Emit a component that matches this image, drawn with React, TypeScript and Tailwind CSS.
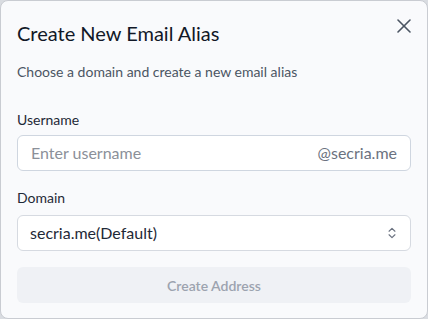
import React from "react";

export default function App() {
  return (
    <div className="w-[428px] h-[319px] bg-[#d9dce1] font-['Lato',sans-serif]">
      <div className="relative w-full h-full rounded-[8px] border border-[#c9ccd2] bg-[#f9fafc] px-4 pt-[18px]">
        <button className="absolute left-[396px] top-[18px] text-[#4b5563]">
          <svg width="14" height="14" viewBox="0 0 14 14" fill="none" stroke="currentColor" strokeWidth="1.6" strokeLinecap="round">
            <path d="M1 1 13 13" />
            <path d="M13 1 1 13" />
          </svg>
        </button>
        <h2 className="text-[20px] leading-[28px] font-normal text-[#111827]">Create New Email Alias</h2>
        <p className="mt-[15px] text-[14px] leading-[20px] text-[#4b5563]">Choose a domain and create a new email alias</p>
        <div className="mt-[28px] flex flex-col">
          <label className="text-[14px] leading-[20px] font-normal text-[#1f2937]">Username</label>
          <div className="mt-[5px] flex h-[36px] items-center rounded-[6px] border border-[#cfd6e0] bg-white px-[13px]">
            <span className="flex-1 text-[16px] text-[#8b9099]">Enter username</span>
            <span className="text-[16px] text-[#6b7280]">@secria.me</span>
          </div>
          <label className="mt-[17px] text-[14px] leading-[20px] font-normal text-[#1f2937]">Domain</label>
          <div className="mt-[7px] flex h-[36px] items-center rounded-[6px] border border-[#d6dae1] bg-white pl-[12px] pr-[11px]">
            <span className="flex-1 text-[16px] text-[#1f2937]">secria.me(Default)</span>
            <svg width="14" height="16" viewBox="0 0 24 24" fill="none" stroke="#6b7280" strokeWidth="2" strokeLinecap="round" strokeLinejoin="round">
              <path d="m7 9 5-5 5 5" />
              <path d="m7 15 5 5 5-5" />
            </svg>
          </div>
          <button className="mt-[16px] h-[36px] rounded-[6px] bg-[#eff1f5] text-[14px] font-semibold text-[#9ca3af]">Create Address</button>
        </div>
      </div>
    </div>
  );
}
